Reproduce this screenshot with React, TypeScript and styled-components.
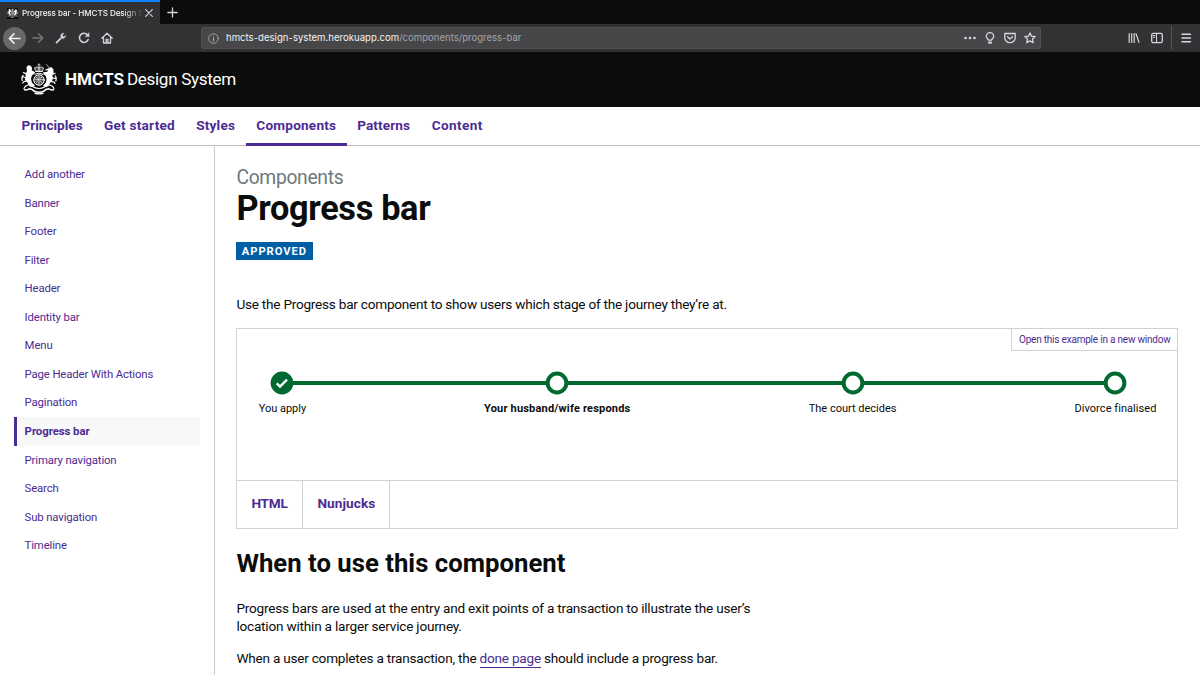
import React from 'react';
import styled, { createGlobalStyle, css } from 'styled-components';

const purple = '#4c2c92';
const line = '#d0d3d6';
const green = '#00692f';

const Global = createGlobalStyle`
  *, *::before, *::after { box-sizing: border-box; }
  html, body { margin: 0; padding: 0; background: #fff; overflow: hidden; }
  body { font-family: Roboto, "Liberation Sans", sans-serif; color: #0b0c0c; }
  a { text-decoration: none; color: inherit; }
  svg { display: block; flex: none; }
`;

const Page = styled.div`
  width: 1200px;
  height: 675px;
  display: flex;
  flex-direction: column;
  overflow: hidden;
`;

/* Browser chrome */
const TabStrip = styled.div`
  flex: none;
  height: 24px;
  display: flex;
  align-items: stretch;
  background: #0c0c0d;
  font-family: Inter, sans-serif;
`;
const Tab = styled.div`
  width: 160px;
  display: flex;
  align-items: center;
  padding: 0 7px 0 7px;
  background: #323234;
  border-top: 2px solid #0a84ff;
  color: #f4f4f5;
`;
const Favicon = styled.span`
  width: 11px;
  height: 11px;
  display: flex;
  align-items: center;
  background: #0b0c0c;
`;
const TabTitle = styled.span`
  width: 121px;
  margin: 0 1px 0 4px;
  white-space: nowrap;
  font-size: 8.1px;
  font-weight: 500;
  line-height: 14px;
  letter-spacing: -0.08px;
  mask-image: linear-gradient(to right, #000 84%, transparent 100%);
`;
const NewTab = styled.div`
  display: flex;
  align-items: center;
  padding-left: 7px;
`;
const Toolbar = styled.div`
  flex: none;
  height: 28px;
  display: flex;
  align-items: center;
  padding: 0 8px 0 3px;
  background: #323234;
`;
const BackButton = styled.div`
  width: 23px;
  height: 23px;
  border-radius: 50%;
  background: #68686a;
  display: flex;
  align-items: center;
  justify-content: center;
`;
const NavIcons = styled.div`
  display: flex;
  align-items: center;
  gap: 11px;
  margin-left: 6px;
  width: 169px;
`;
const UrlBar = styled.div`
  width: 840px;
  height: 22px;
  display: flex;
  align-items: center;
  padding: 0 4px 0 6px;
  border-radius: 2.5px;
  background: #474749;
  border: 1px solid #515153;
`;
const UrlText = styled.span`
  flex: 1;
  margin-left: 7px;
  font-family: Inter, sans-serif;
  font-size: 9.6px;
  line-height: 14px;
  white-space: nowrap;
  color: #f4f4f5;
`;
const UrlPath = styled.span`
  color: #a4a4a7;
  letter-spacing: -0.02px;
`;
const UrlActions = styled.div`
  display: flex;
  align-items: center;
  gap: 8px;
`;
const ToolbarEnd = styled.div`
  margin-left: auto;
  display: flex;
  align-items: center;
  gap: 11px;
`;
const ToolbarDivider = styled.div`
  width: 1px;
  height: 24px;
  margin: 0 -3px 0 -3px;
  background: #555557;
`;

/* Site header */
const Masthead = styled.header`
  flex: none;
  height: 54.6px;
  display: flex;
  align-items: center;
  padding: 0 0 0 21px;
  background: #0b0c0c;
  color: #fff;
`;
const Brand = styled.div`
  display: flex;
  align-items: baseline;
  gap: 3px;
  margin-left: 8px;
  font-size: 17.1px;
  line-height: 24px;
`;
const BrandName = styled.span`
  font-weight: 700;
`;
const BrandProduct = styled.span`
  letter-spacing: -0.34px;
`;

const PrimaryNav = styled.nav`
  flex: none;
  height: 39.4px;
  display: flex;
  padding-left: 11px;
  border-bottom: 1px solid #bfc1c3;
`;
const PrimaryLink = styled.a<{ $width: number; $spacing: number; $active?: boolean }>`
  position: relative;
  width: ${p => p.$width}px;
  padding-left: 10.6px;
  font-size: 13.6px;
  font-weight: 700;
  line-height: 37px;
  white-space: nowrap;
  letter-spacing: ${p => p.$spacing}px;
  color: ${purple};
  ${p => p.$active && css`
    &::after {
      content: '';
      position: absolute;
      left: 0;
      right: 0;
      bottom: -1px;
      height: 3px;
      background: ${purple};
    }
  `}
`;

const Columns = styled.div`
  flex: 1;
  display: flex;
  min-height: 0;
`;
const Sidebar = styled.nav`
  width: 215px;
  padding: 14px 14px 0 14px;
  border-right: 1px solid #c9cbcd;
`;
const SideLink = styled.a<{ $active?: boolean }>`
  display: block;
  height: 28.57px;
  padding-left: 7.6px;
  border-left: 3px solid ${p => (p.$active ? purple : 'transparent')};
  background: ${p => (p.$active ? '#f8f8f8' : 'transparent')};
  background-clip: padding-box;
  font-size: 11.4px;
  font-weight: ${p => (p.$active ? 700 : 400)};
  line-height: 28.6px;
  letter-spacing: ${p => (p.$active ? -0.06 : -0.16)}px;
  color: ${purple};
`;

const Main = styled.main`
  flex: 1;
  padding: 20px 22px 0 21.4px;
`;
const Caption = styled.div`
  font-size: 19.3px;
  line-height: 23px;
  letter-spacing: -0.31px;
  color: #6f777b;
`;
const Title = styled.h1`
  margin: 0;
  font-size: 34.3px;
  font-weight: 700;
  line-height: 39px;
  letter-spacing: -0.32px;
`;
const Status = styled.strong`
  display: block;
  width: 76.4px;
  height: 18px;
  margin: 14px 0 35px;
  padding-left: 5.4px;
  background: #005ea5;
  color: #fff;
  font-size: 11.2px;
  line-height: 19.5px;
  letter-spacing: 0.95px;
`;
const Paragraph = styled.p<{ $spacing: number }>`
  margin: 0;
  width: 560px;
  font-size: 13.6px;
  line-height: 18px;
  letter-spacing: ${p => p.$spacing}px;
`;

const Example = styled.section`
  margin-top: 15px;
  height: 201px;
  display: flex;
  flex-direction: column;
  border: 1px solid ${line};
`;
const Preview = styled.div`
  flex: 1;
  position: relative;
  padding: 42px 20.5px 0 21.5px;
`;
const OpenLink = styled.a`
  position: absolute;
  top: 0;
  right: 0;
  width: 166px;
  height: 22px;
  padding-left: 7px;
  border-left: 1px solid ${line};
  border-bottom: 1px solid ${line};
  font-size: 10px;
  line-height: 21px;
  letter-spacing: -0.21px;
  white-space: nowrap;
  color: ${purple};
`;
const Steps = styled.ol`
  position: relative;
  display: flex;
  justify-content: space-between;
  margin: 0;
  padding: 0;
  list-style: none;
  &::before {
    content: '';
    position: absolute;
    top: 10px;
    left: 24px;
    right: 41px;
    height: 4px;
    background: ${green};
  }
`;
const Step = styled.li<{ $width: number }>`
  position: relative;
  width: ${p => p.$width}px;
  display: flex;
  flex-direction: column;
  align-items: center;
`;
const StepLabel = styled.span<{ $current?: boolean; $spacing: number }>`
  margin-top: 6px;
  font-size: 11px;
  line-height: 16px;
  white-space: nowrap;
  font-weight: ${p => (p.$current ? 700 : 400)};
  letter-spacing: ${p => p.$spacing}px;
`;
const CodeTabs = styled.div`
  height: 48px;
  display: flex;
  border-top: 1px solid ${line};
`;
const CodeTab = styled.a<{ $width: number; $spacing: number }>`
  width: ${p => p.$width}px;
  padding-left: 14px;
  border-right: 1px solid ${line};
  font-size: 13.6px;
  font-weight: 700;
  line-height: 45px;
  letter-spacing: ${p => p.$spacing}px;
  color: ${purple};
`;
const Heading = styled.h2`
  margin: 19px 0 20px;
  font-size: 25.7px;
  font-weight: 700;
  line-height: 31px;
  letter-spacing: 0.02px;
`;
const Gap = styled.div`
  height: 14px;
`;
const InlineLink = styled.a`
  padding-bottom: 1px;
  border-bottom: 1.4px solid ${purple};
  color: ${purple};
`;

const Stroke = ({ size = 12, w = 1.4, color = '#d7d7db', children }: { size?: number; w?: number; color?: string; children: React.ReactNode }) => (
  <svg width={size} height={size} viewBox="0 0 12 12" fill="none" stroke={color} strokeWidth={w} strokeLinecap="round" strokeLinejoin="round">
    {children}
  </svg>
);

const Crest = ({ width, height }: { width: number; height: number }) => (
  <svg width={width} height={height} viewBox="0 0 36 32" fill="none" stroke="#fff" strokeLinecap="round" strokeLinejoin="round">
    {/* crown */}
    <path d="M18 .8v3M16.900 1.900h2.200" strokeWidth="0.7" />
    <path d="M14.500 7.800 13.400 4.900q2-1.700 4.600-.4 2.600-1.300 4.600.4l-1.100 2.900z" strokeWidth="0.7" fill="#555" />
    <path d="M14.700 8.500h6.600M18 4.500v3" strokeWidth="0.9" />
    {/* shield and garter */}
    <circle cx="18" cy="17" r="5.200" strokeWidth="1" fill="#4a4a4a" />
    <path d="M18 13v8M14 16.700h8M15 14.200l2 1.500M20.800 14.200l-1.500 1M15.300 19.300l1.500-1.300M20.700 19.500l-1.200-1.500" strokeWidth="0.7" />
    <path d="M14 11.200q4-2.200 8 0" strokeWidth="1" />
    {/* lion */}
    <path d="M5.400 4.200 7.200 2.300l2.600.4 1.300 2.200-.4 2.300 3 1.800-.8 2-2 1.600-.9 3.200.9 3.600 3 3.200-1.600 1.700-3.500-.6-1.500-2.500-1.800-3.300-1.700-.7.900-3.900L4.500 11l1.500-3z" fill="#fff" stroke="none" />
    <path d="M4.800 10.600 2.400 9.500M4.400 14.500l-2.600-.7M6.200 18l-3.400.7-1 1.300M8 21.500l-3.500 1.700L3 25.500M1.300 17.500Q.2 14.200 2 12.300M10.500 9.500l3 .3" strokeWidth="1.200" />
    {/* unicorn */}
    <path d="m25.600 1.600 3.200 3.900" strokeWidth="0.7" />
    <path d="m27.800 5.300 2.200-1.300 2.300 2 .3 3.500-1.600 1.900 1 3-.8 3.300-2.300 2.300-1.500 3.300-3.400 1-2-1.600 3-3.400.6-3.500-1-3-2-1.500.7-1.500 2.800-.8 1-1.800-2.300.3-.5-1z" fill="#fff" stroke="none" />
    <path d="m31.500 11.400 2.500-1.200M31 15l3 .4M29.500 18.300l3.700.9.700 1.200M28 21.700l3.500 1.500 1.500 2.300M34.800 18q1-3-.5-5.200M25.500 9.500l-3 .3" strokeWidth="1.200" />
    {/* motto ribbon */}
    <path d="M3.500 26.800q3 .4 4.700-1.100l3 .8q1.800 2.500 6.800 2.700 5-.2 6.800-2.700l3-.8q1.700 1.500 4.700 1.100" strokeWidth="1.500" />
    <path d="M12.500 24q5.500 3 11 0M14 30.300q4 1 8 0" strokeWidth="1.200" />
  </svg>
);

const Ring = ({ done }: { done?: boolean }) => (
  <svg width="24" height="24" viewBox="0 0 24 24">
    <circle cx="12" cy="12" r="9.400" fill={done ? green : '#fff'} stroke={green} strokeWidth="4" />
    {done && <path d="m6.700 12.400 3.300 3.200 7-7" fill="none" stroke="#fff" strokeWidth="2.400" />}
  </svg>
);

const navItems: [string, number, number][] = [
  ['Principles', 82.4, -0.02],
  ['Get started', 92.2, 0.24],
  ['Styles', 60.2, 0.21],
  ['Components', 100.8, 0.2],
  ['Patterns', 74.6, 0.12],
  ['Content', 72, 0.36],
];

const sideItems = [
  'Add another', 'Banner', 'Footer', 'Filter', 'Header', 'Identity bar', 'Menu',
  'Page Header With Actions', 'Pagination', 'Progress bar', 'Primary navigation',
  'Search', 'Sub navigation', 'Timeline',
];

const steps = [
  { label: 'You apply', width: 47, spacing: 0, done: true },
  { label: 'Your husband/wife responds', width: 147, spacing: 0.19, current: true },
  { label: 'The court decides', width: 88, spacing: 0 },
  { label: 'Divorce finalised', width: 82, spacing: 0.06 },
];

export default function App() {
  return (
    <Page>
      <Global />
      <TabStrip>
        <Tab>
          <Favicon><Crest width={11} height={10} /></Favicon>
          <TabTitle>Progress bar - HMCTS Design S</TabTitle>
          <Stroke size={10} w={1.4}><path d="M2 2l8 8M10 2l-8 8" /></Stroke>
        </Tab>
        <NewTab><Stroke size={11} w={1.4}><path d="M6 1v10M1 6h10" /></Stroke></NewTab>
      </TabStrip>
      <Toolbar>
        <BackButton><Stroke size={13} w={1.5} color="#f0f0f2"><path d="M11 6H1.200M5.500 1.700 1.200 6l4.300 4.300" /></Stroke></BackButton>
        <NavIcons>
          <Stroke w={1.4} color="#77777a"><path d="M1 6h9.800M6.500 1.700 10.800 6l-4.300 4.300" /></Stroke>
          <Stroke w={1.700}><path d="M1.500 10.700 6 6.200" /><path d="M8.800 1.300A2.700 2.700 0 0 0 6 5.300q1.300 1.700 2.900.9 1.900-.9 1.800-2.700L8.800 5 7.300 3.600z" fill="#d7d7db" strokeWidth="0.5" /></Stroke>
          <Stroke w={1.5}><path d="M10.200 7.500A4.500 4.500 0 1 1 9.300 2.800L10.500 4" /><path d="M11 1v3.600H7.400z" fill="#d7d7db" strokeWidth="0.5" /></Stroke>
          <Stroke w={1.3}><path d="M.8 6.300 6 1.200l5.200 5.100M2.500 5.800v5.200h7V5.800M5.200 11V7.500h1.700V11" /></Stroke>
        </NavIcons>
        <UrlBar>
          <Stroke size={11} w={0.900} color="#b1b1b3"><circle cx="6" cy="6" r="5.200" /><path d="M6 5.500v3" strokeWidth="1.300" /><path d="M6 3.300v.1" strokeWidth="1.400" /></Stroke>
          <UrlText>hmcts-design-system.herokuapp.com<UrlPath>/components/progress-bar</UrlPath></UrlText>
          <UrlActions>
            <Stroke><g fill="#d7d7db" stroke="none"><circle cx="1.500" cy="6" r="1.350" /><circle cx="6" cy="6" r="1.350" /><circle cx="10.500" cy="6" r="1.350" /></g></Stroke>
            <Stroke w={1.3}><path d="M4.400 8.200C4.400 7 2.300 6.300 2.300 4.200a3.700 3.600 0 0 1 7.400 0C9.700 6.300 7.600 7 7.600 8.200z" /><path d="M5 10.600h2" strokeWidth="2.200" /></Stroke>
            <Stroke w={1.3}><path d="M.8 1.500h10.400v4.200a5.200 5 0 0 1-10.400 0z" /><path d="M3.500 4.700 6 7l2.500-2.300" /></Stroke>
            <Stroke w={1.3}><path d="m6 .9 1.500 3.300 3.700.4-2.700 2.500.7 3.600L6 8.900l-3.200 1.800.7-3.600L.8 4.600l3.700-.4z" /></Stroke>
          </UrlActions>
        </UrlBar>
        <ToolbarEnd>
          <Stroke w={1.2}><path d="M1.200 1.500v9M3.700 1.500v9M6.200 1.500v9M8 1.800l3 8.600" /></Stroke>
          <Stroke w={1.3}><rect x=".7" y="1.300" width="10.600" height="9.400" rx="1.600" /><path d="M5.500 1.500v9M2.300 3.500h1.500M2.300 5.200h1.500" strokeWidth="1" /></Stroke>
          <ToolbarDivider />
          <Stroke size={12} w={1.400}><path d="M2 2.200h8.500M2 6h8.500M2 9.800h8.500" /></Stroke>
        </ToolbarEnd>
      </Toolbar>

      <Masthead>
        <Crest width={36} height={32} />
        <Brand><BrandName>HMCTS</BrandName><BrandProduct>Design System</BrandProduct></Brand>
      </Masthead>

      <PrimaryNav>
        {navItems.map(([label, width, spacing]) => (
          <PrimaryLink key={label} href="#" $width={width} $spacing={spacing} $active={label === 'Components'}>{label}</PrimaryLink>
        ))}
      </PrimaryNav>

      <Columns>
        <Sidebar>
          {sideItems.map(label => (
            <SideLink key={label} href="#" $active={label === 'Progress bar'}>{label}</SideLink>
          ))}
        </Sidebar>
        <Main>
          <Caption>Components</Caption>
          <Title>Progress bar</Title>
          <Status>APPROVED</Status>
          <Paragraph $spacing={-0.24}>Use the Progress bar component to show users which stage of the journey they’re at.</Paragraph>
          <Example>
            <Preview>
              <Steps>
                {steps.map(s => (
                  <Step key={s.label} $width={s.width}>
                    <Ring done={s.done} />
                    <StepLabel $current={s.current} $spacing={s.spacing}>{s.label}</StepLabel>
                  </Step>
                ))}
              </Steps>
              <OpenLink href="#">Open this example in a new window</OpenLink>
            </Preview>
            <CodeTabs>
              <CodeTab href="#" $width={66} $spacing={-0.2}>HTML</CodeTab>
              <CodeTab href="#" $width={87} $spacing={0.09}>Nunjucks</CodeTab>
            </CodeTabs>
          </Example>
          <Heading>When to use this component</Heading>
          <Paragraph $spacing={-0.21}>
            Progress bars are used at the entry and exit points of a transaction to illustrate the user’s<br />
            location within a larger service journey.
          </Paragraph>
          <Gap />
          <Paragraph $spacing={-0.23}>
            When a user completes a transaction, the <InlineLink href="#">done page</InlineLink> should include a progress bar.
          </Paragraph>
        </Main>
      </Columns>
    </Page>
  );
}
